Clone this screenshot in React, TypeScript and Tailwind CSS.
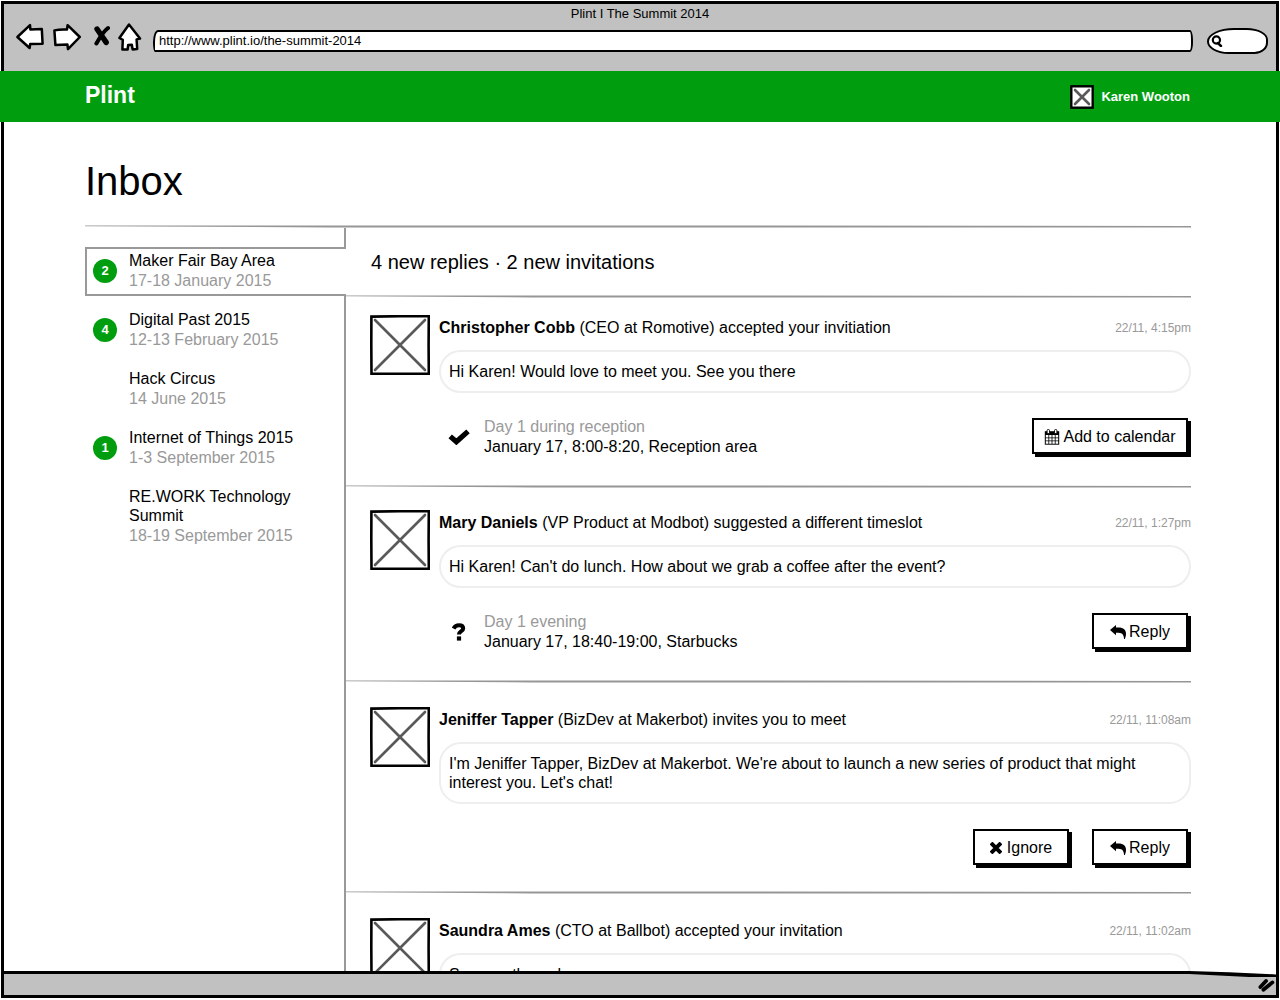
import React from "react";

type Invite = { name: string; date: string; count?: number; selected?: boolean };

const events: Invite[] = [
  { name: "Digital Past 2015", date: "12-13 February 2015", count: 4 },
  { name: "Hack Circus", date: "14 June 2015" },
  { name: "Internet of Things 2015", date: "1-3 September 2015", count: 1 },
  { name: "RE.WORK Technology Summit", date: "18-19 September 2015" },
];

function Placeholder({ className, line }: { className: string; line: number }) {
  return (
    <svg className={className} viewBox="0 0 60 60" aria-hidden="true">
      <path d="M1.4 1.6L30 1.2L58.8 1.3L58.6 30L58.8 58.6L30 58.8L1.5 58.7L1.3 30Z" fill="#fff" stroke="#000" strokeWidth={line} />
      <path d="M5 5L30 30L55 55M55 5L30 30L5 55" fill="none" stroke="#595959" strokeWidth={line} strokeLinecap="round" />
    </svg>
  );
}

/* Pen-drawn divider, slightly tapered towards its left end. */
function Rule() {
  return (
    <svg className="block h-[3px] w-full shrink-0" viewBox="0 0 1000 3" preserveAspectRatio="none" aria-hidden="true">
      <polygon points="0,0.4 450,0.4 1000,1 1000,2.6 450,2.6 220,2.4 0,1.3" fill="#969696" />
    </svg>
  );
}

function Badge({ count }: { count?: number }) {
  if (!count) return <span className="w-6 shrink-0" />;
  return (
    <span className="flex size-6 shrink-0 items-center justify-center rounded-full bg-[#009e0f] text-[13px] font-bold leading-none text-white">
      {count}
    </span>
  );
}

function EventLink({ item }: { item: Invite }) {
  return (
    <a href="#event" className="flex items-start gap-3">
      <span className="flex h-[39px] items-center">
        <Badge count={item.count} />
      </span>
      <span className="w-[180px]">
        <span className="block leading-[19px]">{item.name}</span>
        <span className="mt-px block leading-[19px] text-[#999]">{item.date}</span>
      </span>
    </a>
  );
}

function CalendarIcon() {
  return (
    <svg className="size-4" viewBox="0.5 0 15 16" aria-hidden="true">
      <path d="M0.8 2.2H15.2V15.7H0.8Z" fill="#000" />
      <path d="M1.8 6H4.4V8.4H1.8ZM5.2 6H7.6V8.4H5.2ZM8.4 6H10.8V8.4H8.4ZM11.6 6H14.2V8.4H11.6ZM1.8 9.2H4.4V11.5H1.8ZM5.2 9.2H7.6V11.5H5.2ZM8.4 9.2H10.8V11.5H8.4ZM11.6 9.2H14.2V11.5H11.6ZM1.8 12.3H4.4V14.7H1.8ZM5.2 12.3H7.6V14.7H5.2ZM8.4 12.3H10.8V14.7H8.4ZM11.6 12.3H14.2V14.7H11.6Z" fill="#fff" />
      <rect x="3.1" y="0.5" width="2.4" height="4" rx="1" fill="#fff" stroke="#000" strokeWidth="0.9" />
      <rect x="10.5" y="0.5" width="2.4" height="4" rx="1" fill="#fff" stroke="#000" strokeWidth="0.9" />
    </svg>
  );
}

function ReplyIcon() {
  return (
    <svg className="h-[14px] w-4" viewBox="0 0 16 14" aria-hidden="true">
      <path d="M0 5L6 0V2.6H8.5C13.5 2.6 16 5 16 8.8C16 10.8 15.5 12.3 14.8 13.9H14C14 10.2 12.6 8 8.5 7.7H6V10.2Z" fill="#000" />
    </svg>
  );
}

function CrossIcon() {
  return (
    <svg className="size-3" viewBox="0 0 12 12" aria-hidden="true">
      <path d="M2.4 2.4L9.6 9.6M9.6 2.4L2.4 9.6" stroke="#000" strokeWidth="4" strokeLinecap="square" />
    </svg>
  );
}

function CheckIcon() {
  return (
    <svg className="h-4 w-[22px]" viewBox="0 0 22 16" aria-hidden="true">
      <path d="M2.2 7.4L8.4 12.8L20 2.4" fill="none" stroke="#000" strokeWidth="5.2" />
    </svg>
  );
}

function QuestionIcon() {
  return (
    <svg className="h-[18px] w-[14px]" viewBox="0 0 14 18" aria-hidden="true">
      <path d="M1.6 5.6C2.8 3.2 4.6 2.2 7 2.2C9.6 2.2 11.2 3.4 11.2 5.4C11.2 8.2 6.9 8 6.9 11.6" fill="none" stroke="#000" strokeWidth="4" />
      <rect x="4.9" y="13.4" width="4.2" height="4.2" fill="#000" />
    </svg>
  );
}

function SketchButton({ icon, label, wide, gap = "gap-[3px]" }: { icon: React.ReactNode; label: string; wide?: boolean; gap?: string }) {
  return (
    <button
      type="button"
      className={`flex h-9 items-center justify-center border-2 border-black bg-white pt-px shadow-[3px_3px_0_#000] ${gap} ${wide ? "w-[156px]" : "w-24"}`}
    >
      {icon}
      {label}
    </button>
  );
}

function Message({
  who,
  rest,
  time,
  text,
  pad,
  children,
}: {
  who: string;
  rest: string;
  time: string;
  text: string;
  pad: string;
  children?: React.ReactNode;
}) {
  return (
    <article className={`flex gap-[9px] pl-6 ${pad}`}>
      <Placeholder className="size-[60px] shrink-0" line={2.6} />
      <div className="min-w-0 flex-1">
        <div className="flex h-[26px] items-center justify-between">
          <h2>
            <b>{who}</b> {rest}
          </h2>
          <time className="text-xs text-[#999]">{time}</time>
        </div>
        <p className="mt-[9px] rounded-[22px] border-2 border-[#eee] px-2 py-[10px] leading-[19px]">{text}</p>
        {children}
      </div>
    </article>
  );
}

function Slot({ icon, when, where, action }: { icon: React.ReactNode; when: string; where: string; action: React.ReactNode }) {
  return (
    <div className="mt-[25px] flex h-9 items-center justify-between pr-[3px]">
      <div className="flex items-center pt-[2px]">
        <span className="flex w-10 shrink-0 justify-center">{icon}</span>
        <p className="pl-[5px] leading-5">
          <span className="block text-[#999]">{when}</span>
          <span className="block">{where}</span>
        </p>
      </div>
      {action}
    </div>
  );
}

function Toolbar() {
  const pen = { fill: "#fff", stroke: "#000", strokeWidth: 2.5, strokeLinejoin: "round" as const };
  return (
    <div className="flex items-start pl-3 pr-2">
      <button type="button" aria-label="Back" className="mr-[9px]">
        <svg className="h-7 w-7" viewBox="0 0 28 28">
          <path d="M1.4 14L14 2.2L14.4 6.6L25.8 6L26.6 20.8L14.2 21L13.6 25Z" {...pen} />
        </svg>
      </button>
      <button type="button" aria-label="Forward" className="mr-[13px]">
        <svg className="h-7 w-7" viewBox="0 0 28 28">
          <path d="M1.4 7.4Q7 6.2 14 6.6L14.6 2.2L26.8 14L15 26.2L14.4 21.4L2.4 22Z" {...pen} />
        </svg>
      </button>
      <button type="button" aria-label="Stop" className="mr-2">
        <svg className="h-7 w-4" viewBox="0 0 16 28">
          <path d="M3 6L12.2 19.4" stroke="#000" strokeWidth="5.4" strokeLinecap="round" />
          <path d="M14 5C9.5 8.5 6 14 2.4 20.5" fill="none" stroke="#000" strokeWidth="4" strokeLinecap="round" />
        </svg>
      </button>
      <button type="button" aria-label="Home" className="mr-[11px]">
        <svg className="h-7 w-6" viewBox="0 0 24 28">
          <path d="M11 1.6L22 15.6L18.6 16.4L19.2 26L14.6 26.4L13.8 21.8L10.2 22L9.6 26.6L4.4 26.4L4.8 16.8L1.4 15Z" {...pen} />
        </svg>
      </button>
      <input
        aria-label="Address"
        defaultValue="http://www.plint.io/the-summit-2014"
        className="mt-[7px] h-[22px] min-w-0 flex-1 rounded-[5px_3px_3px_2px/12px_10px_9px_9px] border-2 border-black bg-white px-1 pb-px text-[13px] leading-4 outline-none"
      />
      <label className="ml-[14px] mt-[5px] flex h-[26px] w-[61px] items-center rounded-[28px_22px_14px_22px/14px_12px_12px_13px] border-2 border-black bg-white pl-[2px]">
        <svg className="h-3 w-3 shrink-0" viewBox="0 0 12 12" aria-hidden="true">
          <circle cx="5.4" cy="5" r="3.6" fill="none" stroke="#000" strokeWidth="2.2" />
          <path d="M6.8 8L10 11" stroke="#000" strokeWidth="2.4" strokeLinecap="round" />
        </svg>
        <input aria-label="Search" className="w-9 bg-transparent text-xs outline-none" />
      </label>
    </div>
  );
}

export default function App() {
  return (
    <div className="flex h-screen flex-col overflow-hidden bg-white font-['Liberation_Sans',Arial,sans-serif] text-base text-black">
      <header className="mx-px mt-px h-[70px] shrink-0 border-x-[3px] border-t-[3px] border-black bg-[#c1c1c1]">
        <p className="text-center text-[13px] leading-[19px]">Plint I The Summit 2014</p>
        <Toolbar />
      </header>

      <div className="flex h-[51px] shrink-0 items-center justify-between bg-[#009e0f] pl-[85px] pr-[90px] text-white">
        <a href="#home" className="pb-1 text-[23px] font-bold leading-7">
          Plint
        </a>
        <a href="#profile" className="flex items-center gap-[7px] text-[13px] font-bold">
          <svg className="size-6" viewBox="0 0 24 24" aria-hidden="true">
            <rect x="1.3" y="1.3" width="21.4" height="21.4" fill="#fff" stroke="#000" strokeWidth="2.4" />
            <path d="M5 5L19 19M19 5L5 19" stroke="#595959" strokeWidth="2.6" strokeLinecap="round" />
          </svg>
          Karen Wooton
        </a>
      </div>

      <main className="mx-px flex min-h-0 flex-1 flex-col overflow-hidden border-x-[3px] border-black pl-[81px] pr-[85px] pt-[39px]">
        <h1 className="mb-6 shrink-0 text-[40px] leading-10">Inbox</h1>
        <Rule />
        <div className="flex min-h-0 flex-1">
          <nav aria-label="Events" className="flex w-[261px] shrink-0 flex-col">
            <div className="h-[19px] border-r-2 border-[#999]" />
            <div className="h-[49px] border-y-2 border-l-2 border-[#999] pl-[6px] pt-[2px]">
              <EventLink item={{ name: "Maker Fair Bay Area", date: "17-18 January 2015", count: 2 }} />
            </div>
            <ul className="flex flex-1 flex-col gap-5 border-r-2 border-[#999] pl-2 pt-[14px]">
              {events.map((item) => (
                <li key={item.name}>
                  <EventLink item={item} />
                </li>
              ))}
            </ul>
          </nav>

          <section aria-label="Messages" className="min-w-0 flex-1">
            <p className="flex h-[67px] items-center pl-[25px] text-xl">4 new replies · 2 new invitations</p>
            <Rule />
            <Message
              who="Christopher Cobb"
              rest="(CEO at Romotive) accepted your invitiation"
              time="22/11, 4:15pm"
              text="Hi Karen! Would love to meet you. See you there"
              pad="pb-[31px] pt-[17px]"
            >
              <Slot
                icon={<CheckIcon />}
                when="Day 1 during reception"
                where="January 17, 8:00-8:20, Reception area"
                action={<SketchButton wide icon={<CalendarIcon />} label="Add to calendar" />}
              />
            </Message>
            <Rule />
            <Message
              who="Mary Daniels"
              rest="(VP Product at Modbot) suggested a different timeslot"
              time="22/11, 1:27pm"
              text="Hi Karen! Can't do lunch. How about we grab a coffee after the event?"
              pad="pb-[31px] pt-[22px]"
            >
              <Slot
                icon={<QuestionIcon />}
                when="Day 1 evening"
                where="January 17, 18:40-19:00, Starbucks"
                action={<SketchButton icon={<ReplyIcon />} label="Reply" />}
              />
            </Message>
            <Rule />
            <Message
              who="Jeniffer Tapper"
              rest="(BizDev at Makerbot) invites you to meet"
              time="22/11, 11:08am"
              text="I'm Jeniffer Tapper, BizDev at Makerbot. We're about to launch a new series of product that might interest you. Let's chat!"
              pad="pb-[26px] pt-6"
            >
              <div className="mt-[25px] flex justify-end gap-[23px] pr-[3px]">
                <SketchButton gap="gap-[5px]" icon={<CrossIcon />} label="Ignore" />
                <SketchButton icon={<ReplyIcon />} label="Reply" />
              </div>
            </Message>
            <Rule />
            <Message
              who="Saundra Ames"
              rest="(CTO at Ballbot) accepted your invitation"
              time="22/11, 11:02am"
              text="See you there, hope so"
              pad="pt-6"
            />
          </section>
        </div>
      </main>

      <footer className="relative mx-px mb-[2px] flex h-[27px] shrink-0 items-center justify-end border-[3px] border-black bg-[#c1c1c1]">
        <svg className="absolute -right-[3px] -top-[3px] h-[6px] w-[90px]" viewBox="0 0 90 6" aria-hidden="true">
          <path d="M0 0H90V6H60L0 3Z" fill="#000" />
          <path d="M0 0H87V3.4L40 1.2Z" fill="#fff" />
        </svg>
        <svg className="mr-px h-4 w-[17px]" viewBox="0 0 17 16" aria-hidden="true">
          <path d="M2.4 10L8 4M5.4 12.8L14.4 5.4" stroke="#000" strokeWidth="3.8" strokeLinecap="round" />
        </svg>
      </footer>
    </div>
  );
}
